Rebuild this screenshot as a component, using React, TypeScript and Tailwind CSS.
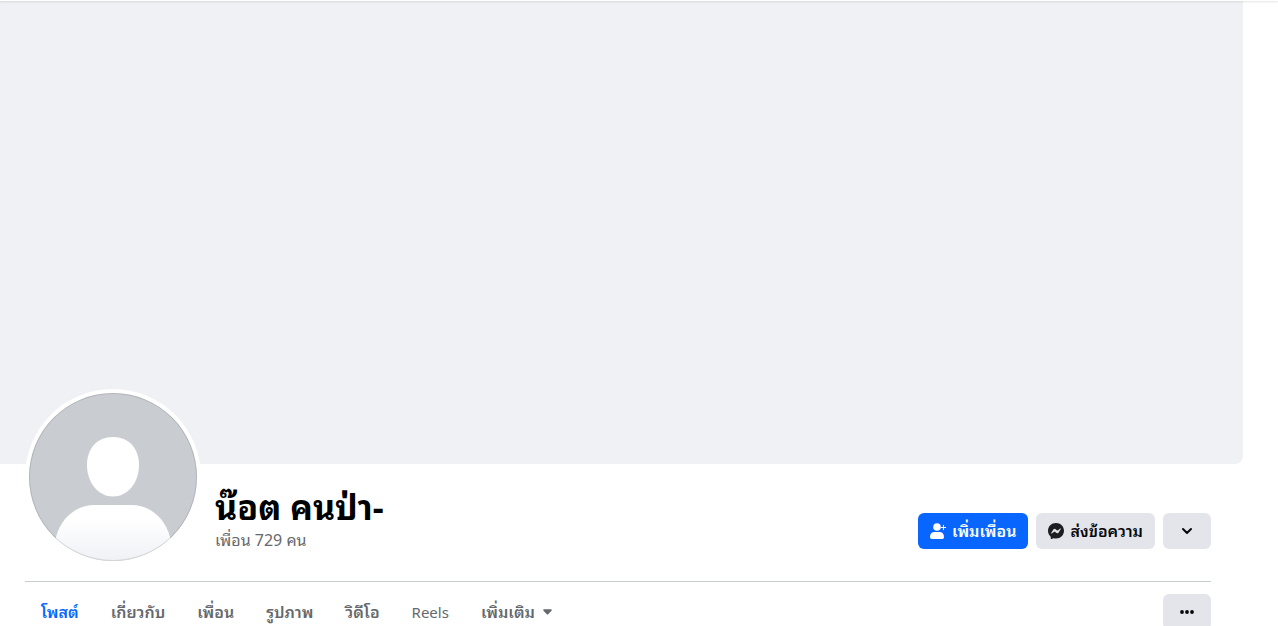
import React from "react";

const tabs = ["โพสต์", "เกี่ยวกับ", "เพื่อน", "รูปภาพ", "วิดีโอ", "Reels"];

const tabStyle = (tab: string, active: boolean) => {
  if (active) return "px-4 text-[#0866ff]";
  return tab === "Reels" ? "px-4 text-[15px] font-normal" : "px-4";
};

const Avatar: React.FC = () => (
  <a href="#photo" aria-label="น๊อต คนป่า-" className="-mt-[75px] shrink-0 rounded-full bg-white p-1">
    <svg viewBox="0 0 168 168" className="block size-[168px]" aria-hidden="true">
      <defs>
        <clipPath id="avatar-circle">
          <circle cx="84" cy="84" r="84" />
        </clipPath>
        <linearGradient id="avatar-body" x1="0" y1="0" x2="0" y2="1">
          <stop offset="0" stopColor="#fff" />
          <stop offset="0.25" stopColor="#fff" />
          <stop offset="1" stopColor="#eff1f5" />
        </linearGradient>
      </defs>
      <g clipPath="url(#avatar-circle)">
        <rect width="168" height="168" fill="#c9ccd1" />
        <path d="M84 44c16 0 26 11.500 26 28 0 18-11.500 31.500-26 31.500S58 90 58 72c0-16.500 10-28 26-28Z" fill="#fff" />
        <path d="M66 112h36c19 0 34 13 39 32v24H27v-24c5-19 20-32 39-32Z" fill="url(#avatar-body)" />
      </g>
      <circle cx="84" cy="84" r="83.500" fill="none" stroke="#000" strokeOpacity="0.12" />
    </svg>
  </a>
);

const AddFriendIcon: React.FC = () => (
  <svg viewBox="0 0 16 16" className="size-4 shrink-0" fill="currentColor" aria-hidden="true">
    <circle cx="7" cy="4" r="3.800" />
    <path d="M4.500 9h5c2.600 0 4.500 2 4.500 4.800 0 1.300-.5 2.200-1.500 2.200h-11C.5 16 0 15.100 0 13.800 0 11 1.900 9 4.500 9Z" />
    <path d="M13.500 2.300v4.400M11.300 4.500h4.400" stroke="currentColor" strokeWidth="1" strokeLinecap="round" />
  </svg>
);

const MessengerIcon: React.FC = () => (
  <svg viewBox="0 0 16 16" className="size-4 shrink-0 text-[#1c1e21]" fill="currentColor" aria-hidden="true">
    <path
      fillRule="evenodd"
      d="M8 0C3.500 0 0 3.300 0 7.760c0 2.330.960 4.350 2.510 5.740.130.120.210.280.220.460l.040 1.420c.010.460.480.750.900.570l1.590-.7a.64.64 0 0 1 .43-.03c.73.200 1.500.300 2.310.300 4.500 0 8-3.300 8-7.760S12.500 0 8 0ZM3.200 10.030l2.350-3.730a1.200 1.200 0 0 1 1.740-.32l1.870 1.400a.48.48 0 0 0 .58 0l2.520-1.910c.34-.26.78.150.55.510l-2.350 3.730a1.200 1.200 0 0 1-1.740.32l-1.870-1.400a.48.48 0 0 0-.58 0l-2.520 1.910c-.34.260-.78-.15-.55-.51Z"
    />
  </svg>
);

const App: React.FC = () => {
  return (
    <div className="overflow-hidden bg-white font-['Noto_Sans','Noto_Sans_Thai_Looped','Noto_Looped_Thai','Loma','Waree','Garuda','Noto_Sans_Thai',sans-serif] text-[#080809]">
      <main>
        <div className="mr-[35px] h-[464px] rounded-br-lg bg-[#f0f1f5]" />

        <section className="pl-[25px] pr-[67px]">
          <div className="flex border-b border-[#c9ccd1] pb-4">
            <Avatar />
            <div className="ml-[14px] flex-1 pt-6">
              <h1 className="text-[34px] font-bold leading-[38px] text-black">น๊อต คนป่า-</h1>
              <a href="#friends" className="block w-max text-base leading-7 text-[#65686c]">
                เพื่อน 729 คน
              </a>
            </div>
            <div className="flex gap-2 pt-[49px]">
              <button className="flex h-9 items-center gap-[6px] rounded-md bg-[#0866ff] px-3 text-base font-semibold text-white">
                <AddFriendIcon />
                เพิ่มเพื่อน
              </button>
              <button className="flex h-9 items-center gap-[6px] rounded-md bg-[#e4e5ea] px-3 text-base font-semibold">
                <MessengerIcon />
                ส่งข้อความ
              </button>
              <button aria-label="ดูเพิ่มเติม" className="flex h-9 w-12 items-center justify-center rounded-md bg-[#e4e5ea]">
                <svg viewBox="0 0 16 16" className="size-4" fill="none" stroke="currentColor" strokeWidth="2" strokeLinecap="round" strokeLinejoin="round" aria-hidden="true">
                  <path d="m4 6 4 4 4-4" />
                </svg>
              </button>
            </div>
          </div>

          <div className="flex h-[60px] items-center justify-between">
            <nav className="flex items-center text-base font-semibold text-[#65686c]">
              {tabs.map((tab, i) => (
                <a key={tab} href="#tab" className={tabStyle(tab, i === 0)}>
                  {tab}
                </a>
              ))}
              <button className="flex items-center gap-2 px-4">
                เพิ่มเติม
                <svg viewBox="0 0 10 6" className="h-[6px] w-[9px]" fill="currentColor" aria-hidden="true">
                  <path d="M1.200 0h7.600c.9 0 1.300.9.700 1.500L5.700 5.600a1 1 0 0 1-1.400 0L.5 1.500C-.1.900.3 0 1.200 0Z" />
                </svg>
              </button>
            </nav>
            <button aria-label="ตัวเลือก" className="flex h-9 w-12 items-center justify-center rounded-md bg-[#e4e5ea]">
              <svg viewBox="0 0 16 16" className="size-4" fill="currentColor" aria-hidden="true">
                <circle cx="3" cy="8" r="1.900" />
                <circle cx="8" cy="8" r="1.900" />
                <circle cx="13" cy="8" r="1.900" />
              </svg>
            </button>
          </div>
        </section>
      </main>
      <div className="absolute inset-x-0 top-0 h-px bg-white shadow-[0_1px_2px_rgba(0,0,0,0.15)]" />
    </div>
  );
};

export default App;
